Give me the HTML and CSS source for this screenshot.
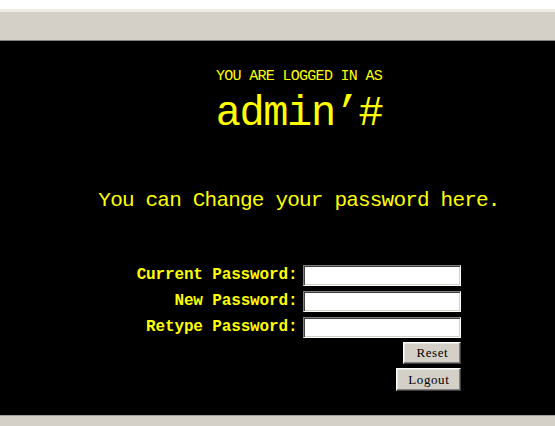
FILE: index.html
```html
<!DOCTYPE html>
<html>
<head>
<meta charset="utf-8">
<title>Change password</title>
<link rel="stylesheet" href="styles.css">
</head>
<body>
<div class="top"></div>
<div class="toolbar"></div>
<main class="panel">
  <p class="logged">YOU ARE LOGGED IN AS</p>
  <p class="user">admin’#</p>
  <p class="msg">You can Change your password here.</p>
  <form class="form">
    <label class="lbl" for="cur">Current Password:</label>
    <input class="field" id="cur" type="password">
    <label class="lbl" for="new">New Password:</label>
    <input class="field" id="new" type="password">
    <label class="lbl" for="re">Retype Password:</label>
    <input class="field" id="re" type="password">
    <div class="actions">
      <button class="btn btn-reset" type="reset">Reset</button>
      <button class="btn btn-logout" type="button">Logout</button>
    </div>
  </form>
</main>
<div class="bottom"></div>
</body>
</html>
```

FILE: styles.css
```css
html, body {
  margin: 0;
  padding: 0;
  background: #ffffff;
  height: 426px;
  overflow: hidden;
}
.top {
  height: 9px;
  background: #ffffff;
}
.toolbar {
  height: 28px;
  background: #d4d0c8;
  border-top: 3px solid #ecebe5;
  border-bottom: 1px solid #808080;
}
.panel {
  box-sizing: border-box;
  height: 374px;
  background: #000000;
  padding: 28px 0 0 43px;
  color: #ffff00;
  font-family: "Liberation Mono", "DejaVu Sans Mono", monospace;
  text-align: center;
}
.panel p {
  margin: 0;
}
.logged {
  font-size: 15px;
  line-height: 15px;
  letter-spacing: -0.7px;
}
.user {
  margin-top: 9px !important;
  font-size: 42px;
  line-height: 42px;
  letter-spacing: -1.4px;
}
.msg {
  margin-top: 55px !important;
  font-size: 21px;
  line-height: 21px;
  letter-spacing: -0.8px;
}
.form {
  margin: 54px auto 0;
  display: grid;
  grid-template-columns: auto 158px;
  column-gap: 6px;
  row-gap: 5px;
  justify-content: center;
  align-items: center;
}
.lbl {
  text-align: right;
  font-weight: bold;
  font-size: 16px;
  line-height: 21px;
  letter-spacing: -0.15px;
  color: #ffff00;
}
.field {
  box-sizing: border-box;
  width: 158px;
  height: 21px;
  margin: 0;
  padding: 0 2px;
  background: #ffffff;
  border: 1px solid;
  border-color: #808080 #ffffff #ffffff #808080;
  box-shadow: inset 1px 1px 0 #404040, inset -1px -1px 0 #d4d0c8;
  outline: none;
}
.actions {
  grid-column: 2;
  margin-top: -1px;
  display: flex;
  flex-direction: column;
  align-items: flex-end;
  gap: 4px;
}
.btn {
  box-sizing: border-box;
  margin: 0;
  padding: 0;
  background: #d4d0c8;
  border: 1px solid;
  border-color: #ffffff #404040 #404040 #ffffff;
  box-shadow: inset -1px -1px 0 #808080, inset 1px 1px 0 #e8e6e0;
  font-family: "Liberation Serif", "DejaVu Serif", serif;
  font-size: 13px;
  letter-spacing: 0.6px;
  color: #000000;
}
.btn-reset {
  width: 58px;
  height: 22px;
}
.btn-logout {
  width: 65px;
  height: 23px;
}
.bottom {
  height: 10px;
  background: #d4d0c8;
  border-top: 1px solid #a0a0a0;
}
```
